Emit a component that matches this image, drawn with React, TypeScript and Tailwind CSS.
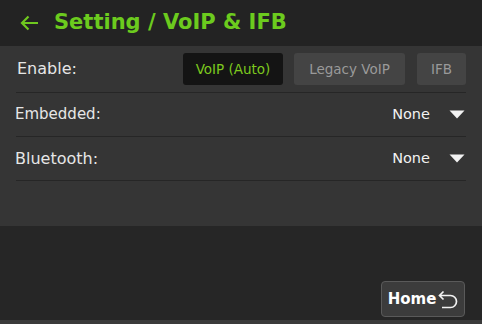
import React from "react";

const font = { fontFamily: '"DejaVu Sans", Verdana, sans-serif' };

function Tri() {
  return (
    <svg width="16" height="9" viewBox="0 0 16 9" className="ml-[19px]">
      <path d="M0.5 0.5 H15.5 L8 8.5 Z" fill="#f2f2f2" />
    </svg>
  );
}

function SelectRow({ label, size }: { label: string; size: string }) {
  return (
    <div className="flex items-center h-[44px] border-b border-[#262626] mx-[16px] pr-[1px]">
      <span className={`${size} text-[#e6e6e6] -ml-[1px]`}>{label}</span>
      <div className="ml-auto flex items-center">
        <span className="text-[14.5px] text-[#f2f2f2]">None</span>
        <Tri />
      </div>
    </div>
  );
}

export default function App() {
  return (
    <div className="w-[482px] h-[324px] bg-[#262626] flex flex-col overflow-hidden" style={font}>
      <div className="h-[46px] bg-[#232323] flex items-center pl-[20px]">
        <svg width="19" height="16" viewBox="0 0 19 16" className="mt-[-1px]">
          <path d="M18 8 H2 M8.5 1.5 L2 8 L8.5 14.5" stroke="#6fc81f" strokeWidth="2.2" fill="none" />
        </svg>
        <span className="ml-[15px] text-[21px] font-bold text-[#6ccb1e] leading-none mt-[-1px]">
          Setting / VoIP &amp; IFB
        </span>
      </div>
      <div className="h-[180px] bg-[#353535] flex flex-col">
        <div className="flex items-center h-[47px] border-b border-[#262626] mx-[16px]">
          <span className="text-[16px] text-[#e6e6e6] ml-[1px]">Enable:</span>
          <div className="ml-auto flex items-center gap-[11px]">
            <div className="w-[100px] h-[32px] rounded-[3px] bg-[#141414] flex items-center justify-center text-[13.5px] text-[#7dc91e]">
              VoIP (Auto)
            </div>
            <div className="w-[111px] h-[32px] rounded-[3px] bg-[#444444] flex items-center justify-center text-[13.5px] text-[#9a9a9a]">
              Legacy VoIP
            </div>
            <div className="w-[49px] h-[32px] rounded-[3px] bg-[#444444] flex items-center justify-center text-[13.5px] text-[#9a9a9a] ml-[1px]">
              IFB
            </div>
          </div>
        </div>
        <SelectRow label="Embedded:" size="text-[15px]" />
        <SelectRow label="Bluetooth:" size="text-[16px]" />
      </div>
      <div className="flex-1 flex justify-end items-end pr-[17px] pb-[3px]">
        <div className="w-[84px] h-[36px] rounded-[4px] border border-[#5a5a5a] bg-[#3c3c3c] flex items-center justify-center gap-[1px] pl-[1px]">
          <span className="text-[15px] font-bold text-white">Home</span>
          <svg width="22" height="22" viewBox="0 0 22 22" className="mt-[1px]">
            <path d="M6.5 2.5 L2.5 6.5 L6.5 10.5 M2.5 6.5 H13.5 a6 6 0 0 1 0 12 H5" stroke="#f2f2f2" strokeWidth="1.7" fill="none" />
          </svg>
        </div>
      </div>
      <div className="h-[4px] bg-[#3a3a3a]" />
    </div>
  );
}
